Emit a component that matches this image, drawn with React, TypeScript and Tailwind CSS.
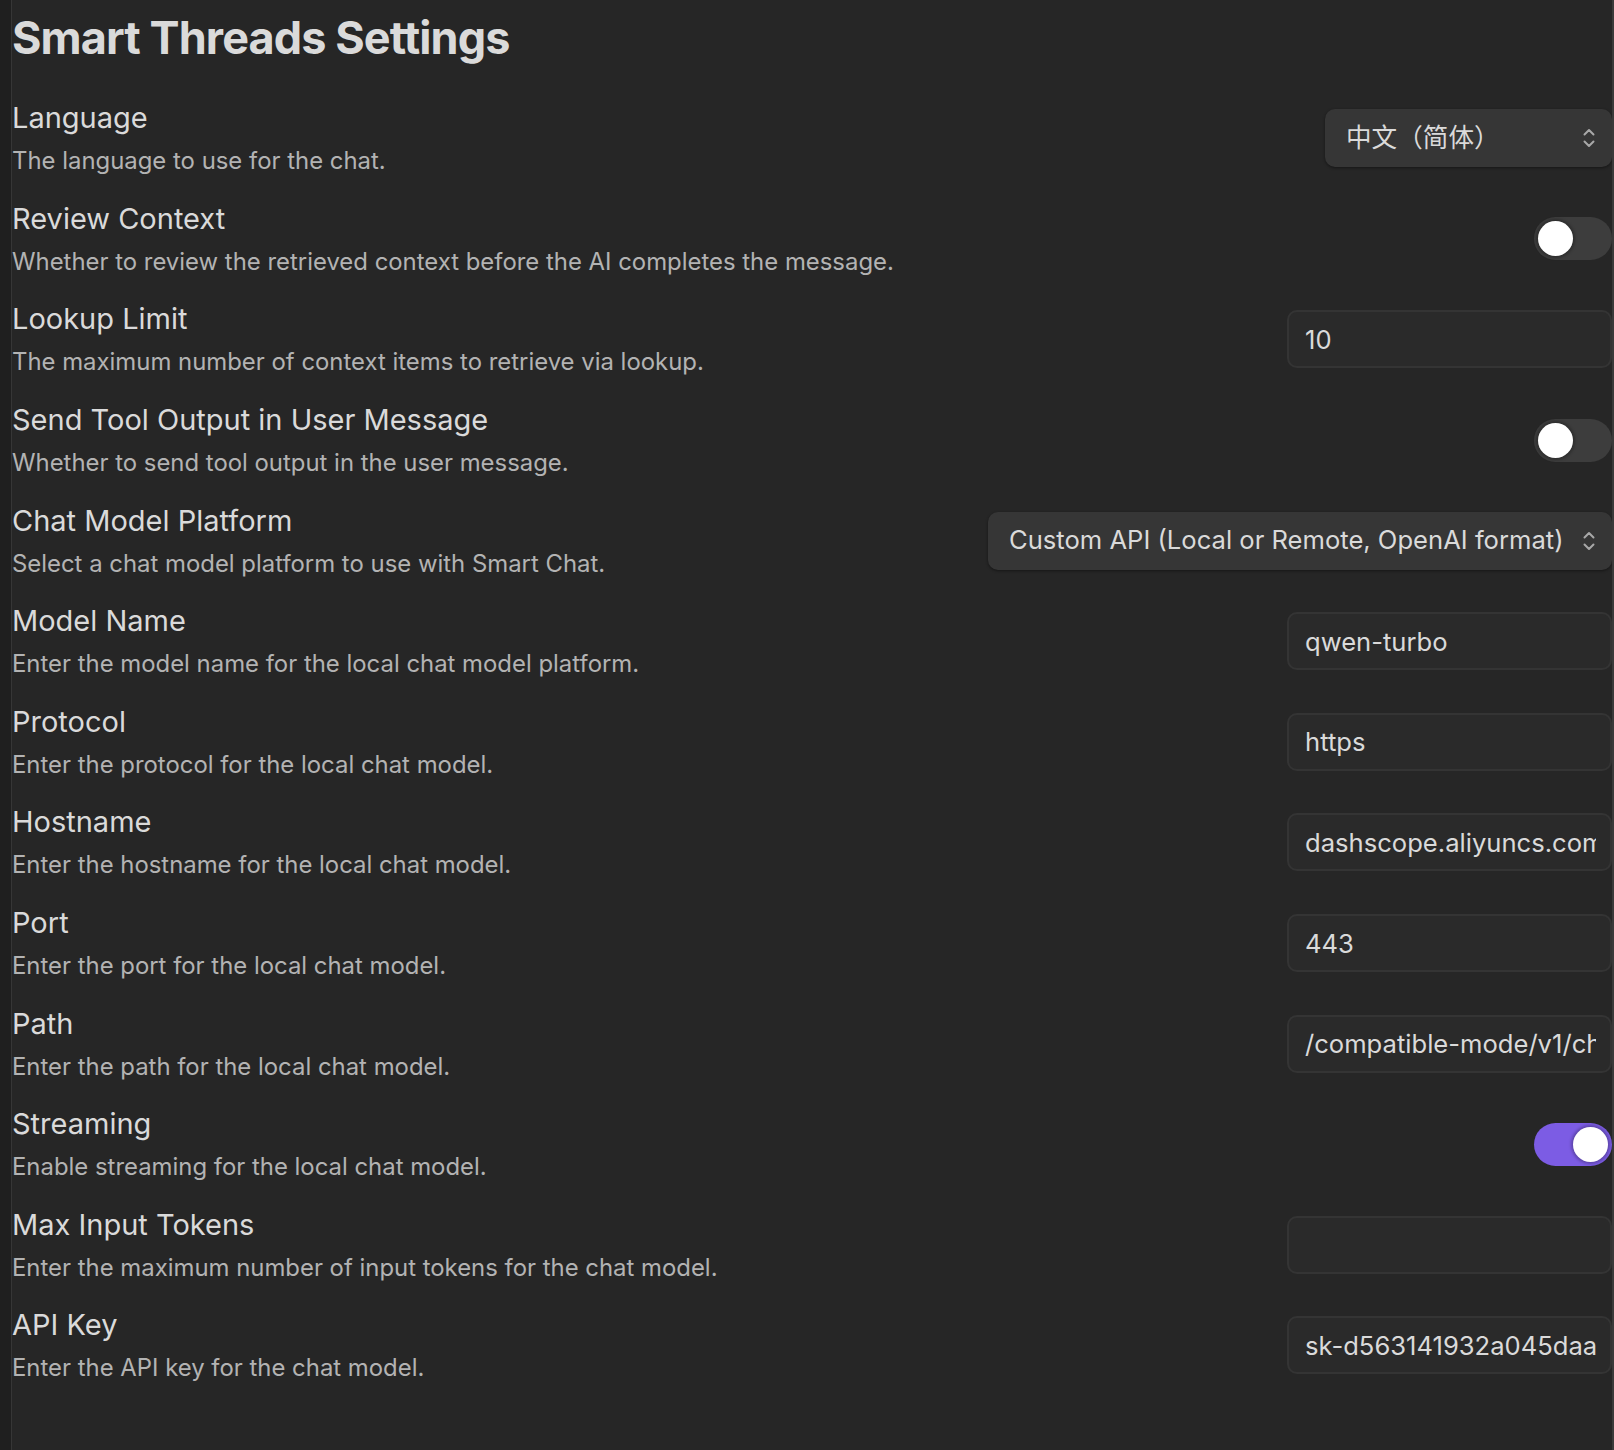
import React from "react";

const FONT = { fontFamily: 'Inter, "Noto Sans CJK SC", "Noto Sans", sans-serif' };

function Chevrons() {
  return (
    <svg width="14" height="24" viewBox="0 0 14 24" fill="none" stroke="#a8a8a8" strokeWidth="2" strokeLinecap="round" strokeLinejoin="round">
      <path d="M2.5 8.5 L7 4 L11.5 8.5" />
      <path d="M2.5 15.5 L7 20 L11.5 15.5" />
    </svg>
  );
}

function Dropdown({ value, width }: { value: string; width: string }) {
  return (
    <div className={`${width} h-[58px] rounded-[10px] bg-[#363636] shadow-[0_1px_3px_rgba(0,0,0,0.45)] flex items-center justify-between pl-[21px] pr-[16px] text-[25.6px] text-[#dadada]`}>
      <span className="whitespace-nowrap">{value}</span>
      <Chevrons />
    </div>
  );
}

function Toggle({ on }: { on: boolean }) {
  return (
    <div className={`w-[78px] h-[43px] rounded-full flex items-center px-[4px] ${on ? "bg-[#7c5ce4] justify-end" : "bg-[#3d3d3d] justify-start"}`}>
      <div className="w-[35px] h-[35px] rounded-full bg-white shadow-[0_0_3px_2px_rgba(0,0,0,0.25)]" />
    </div>
  );
}

function TextInput({ value }: { value: string }) {
  return (
    <input
      readOnly
      value={value}
      style={FONT}
      className="w-[325px] h-[58px] rounded-[10px] bg-[#2a2a2a] border-2 border-[#343434] pl-[16px] pr-[14px] text-[25.6px] text-[#dadada] outline-none"
    />
  );
}

type Row = { name: string; desc: string; control: React.ReactNode };

const rows: Row[] = [
  { name: "Language", desc: "The language to use for the chat.", control: <Dropdown value="中文（简体）" width="w-[287px]" /> },
  { name: "Review Context", desc: "Whether to review the retrieved context before the AI completes the message.", control: <Toggle on={false} /> },
  { name: "Lookup Limit", desc: "The maximum number of context items to retrieve via lookup.", control: <TextInput value="10" /> },
  { name: "Send Tool Output in User Message", desc: "Whether to send tool output in the user message.", control: <Toggle on={false} /> },
  { name: "Chat Model Platform", desc: "Select a chat model platform to use with Smart Chat.", control: <Dropdown value="Custom API (Local or Remote, OpenAI format)" width="w-[624px]" /> },
  { name: "Model Name", desc: "Enter the model name for the local chat model platform.", control: <TextInput value="qwen-turbo" /> },
  { name: "Protocol", desc: "Enter the protocol for the local chat model.", control: <TextInput value="https" /> },
  { name: "Hostname", desc: "Enter the hostname for the local chat model.", control: <TextInput value="dashscope.aliyuncs.com" /> },
  { name: "Port", desc: "Enter the port for the local chat model.", control: <TextInput value="443" /> },
  { name: "Path", desc: "Enter the path for the local chat model.", control: <TextInput value="/compatible-mode/v1/chat/completions" /> },
  { name: "Streaming", desc: "Enable streaming for the local chat model.", control: <Toggle on={true} /> },
  { name: "Max Input Tokens", desc: "Enter the maximum number of input tokens for the chat model.", control: <TextInput value="" /> },
  { name: "API Key", desc: "Enter the API key for the chat model.", control: <TextInput value="sk-d563141932a045daa8c1e7b2f0" /> },
];

export default function App() {
  return (
    <div className="flex min-h-[1450px] w-[1614px] bg-[#262626]" style={FONT}>
      <div className="w-[11px] bg-[#1f1f1f]" />
      <div className="w-px bg-[#363636]" />
      <main className="w-[1600px] bg-[#262626] overflow-hidden">
        <h1 className="pt-[8px] h-[60px] leading-[60px] mb-[28px] text-[45px] font-bold tracking-[-0.02em] text-[#dadada]">
          Smart Threads Settings
        </h1>
        {rows.map((r) => (
          <div key={r.name} className="flex items-center justify-between h-[100.6px]">
            <div className="self-stretch pt-[9.3px]">
              <div className="h-[42px] leading-[42px] text-[29px] text-[#dadada] whitespace-nowrap">{r.name}</div>
              <div className="h-[43px] leading-[43px] text-[23.9px] text-[#b3b3b3] whitespace-nowrap">{r.desc}</div>
            </div>
            <div className="shrink-0 flex items-center">{r.control}</div>
          </div>
        ))}
      </main>
      <div className="w-[2px] bg-[#3a3a3a]" />
    </div>
  );
}
